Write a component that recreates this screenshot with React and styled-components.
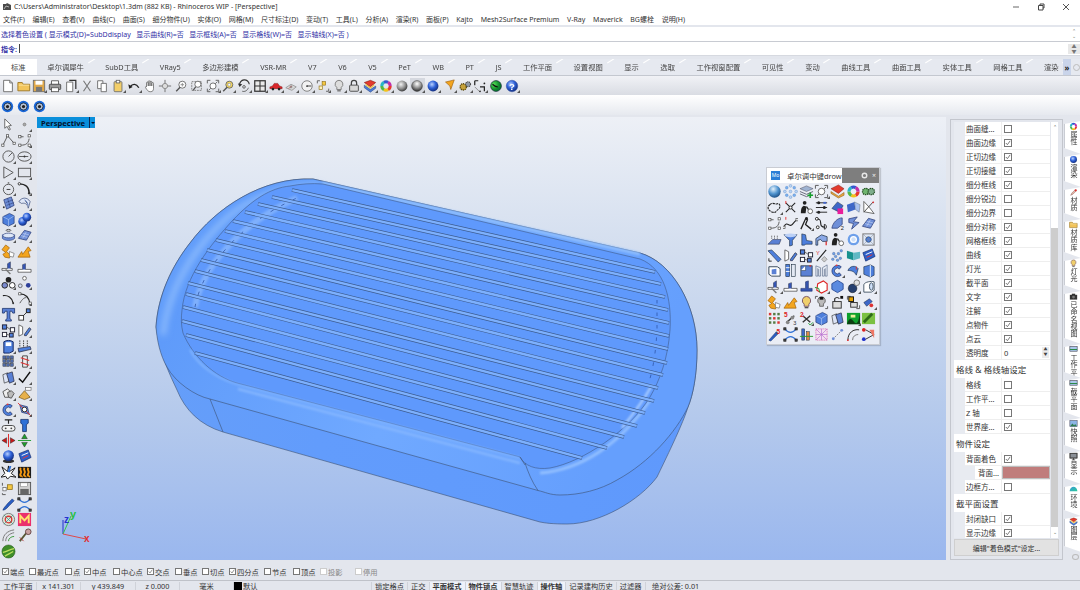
import React from "react";
import styled, { createGlobalStyle } from "styled-components";

const GlobalStyle = createGlobalStyle`
html, body { margin: 0; padding: 0; }
body {
  width: 1080px;
  height: 590px;
  overflow: hidden;
  background: #e3e6ed;
  font-family: "Noto Sans", "Noto Sans CJK SC", sans-serif;
  font-size: 7px;
  color: #333;
}
`;

const Window = styled.div`
  width: 1080px;
  height: 590px;
  display: flex;
  flex-direction: column;
  overflow: hidden;
  filter: blur(0.3px);
`;

const TitleBar = styled.div`
  height: 13px;
  display: flex;
  align-items: center;
  padding-left: 3px;
  background: #fff;
  font-size: 7px;
  white-space: nowrap;
`;

const TitleText = styled.span`
  margin-left: 3px;
  flex: 1;
`;

const WinButton = styled.svg`
  width: 8px;
  height: 8px;
  margin-right: ${(p) => p.$gap}px;
`;

const MenuBar = styled.div`
  height: 12px;
  display: flex;
  align-items: center;
  gap: 7.7px;
  padding-left: 3px;
  background: #fff;
  font-size: 7px;
  white-space: nowrap;
`;

const CommandBox = styled.div`
  margin-top: 2px;
  height: 29px;
  box-sizing: border-box;
  display: flex;
  flex-direction: column;
  background: #fff;
  border-bottom: 1px solid #d6d9e0;
  color: #2f2fa5;
  font-size: 7px;
`;

const CommandLine = styled.div`
  height: ${(p) => p.$h}px;
  display: flex;
  align-items: center;
  padding-left: 1px;
  white-space: pre;
  font-weight: ${(p) => (p.$bold ? 700 : 400)};
  border-top: ${(p) => (p.$line ? "1px solid #c8cbd2" : "none")};
`;

const Caret = styled.span`
  width: 1px;
  height: 9px;
  margin-left: 2px;
  background: #444;
`;

const LineFill = styled.span`
  flex: 1;
`;

const ScrollArrows = styled.span`
  width: 12px;
  margin-right: 0;
  display: flex;
  flex-direction: column;
  align-items: center;
  color: #777;
  font-size: 5px;
  line-height: 5px;
  background: ${(p) => (p.$boxed ? "#e8e8e8" : "transparent")};
`;

const TabStrip = styled.div`
  margin-top: 3px;
  height: 17px;
  box-sizing: border-box;
  display: flex;
  align-items: flex-end;
  background: #e6e9f0;
  border-bottom: 1px solid #c4c8d0;
  overflow: hidden;
  font-size: 7.3px;
  white-space: nowrap;
`;

const Tab = styled.div`
  position: relative;
  height: 16px;
  display: flex;
  align-items: center;
  justify-content: center;
  padding: 0 ${(p) => p.$pad ?? 10.75}px;
  color: #444;
  background: ${(p) => (p.$active ? "#fff" : "transparent")};
  &::after {
    content: "";
    position: absolute;
    right: -2px;
    top: 1px;
    width: 8px;
    height: 5px;
    border-top: 1px solid #fff;
    transform: rotate(-32deg);
  }
`;

const TabMore = styled.div`
  position: absolute;
  left: 1063px;
  top: 59px;
  width: 8px;
  height: 16px;
  background: #c9d4ea;
  display: flex;
  align-items: center;
  justify-content: center;
  color: #222;
  font-size: 8px;
  font-weight: 700;
`;

const TabGear = styled.div`
  position: absolute;
  left: 1073px;
  top: 64px;
  width: 5px;
  height: 5px;
  border: 1px solid #bbb;
  border-radius: 50%;
`;

const Toolbar = styled.div`
  height: 19px;
  display: flex;
  align-items: center;
  background: linear-gradient(#f1f2f6, #d9dce3);
`;

const SubToolbar = styled.div`
  height: 20px;
  box-sizing: border-box;
  padding-top: 3px;
  display: flex;
  align-items: center;
  background: linear-gradient(#fff, #e6e9ef);
`;

const Cell = styled.span`
  position: relative;
  flex: none;
  width: ${(p) => p.$w ?? 15.75}px;
  height: 15px;
  display: flex;
  align-items: center;
  justify-content: center;
  background: ${(p) => (p.$on ? "#d5d8df" : "transparent")};
  svg { display: block; }
`;

const Corner = styled.i`
  position: absolute;
  right: 0;
  bottom: 0;
  width: 0;
  height: 0;
  border-left: 3px solid transparent;
  border-bottom: 3px solid #555;
`;

const Main = styled.div`
  height: 445px;
  display: flex;
  background: #e3e6ed;
`;

const LeftTools = styled.div`
  width: 37px;
  flex: none;
  display: grid;
  grid-template-columns: 16px 16px;
  grid-auto-rows: 15.8px;
  justify-items: center;
  align-items: center;
  align-content: start;
  padding-top: 2px;
  box-sizing: border-box;
`;

const Viewport = styled.div`
  position: relative;
  width: 909px;
  height: 443px;
  margin-top: 2px;
  flex: none;
  background: linear-gradient(#edf0f6 0%, #d3deef 30%, #b4c9ec 68%, #9ab7ee 100%);
`;

const ViewLabel = styled.div`
  position: absolute;
  left: 0;
  top: 0;
  width: 58px;
  height: 11px;
  display: flex;
  align-items: center;
  background: #0a8fdb;
  color: #04122e;
  font-size: 7.6px;
  font-weight: 700;
  padding-left: 4px;
  box-sizing: border-box;
`;

const LabelArrow = styled.span`
  position: absolute;
  right: 0;
  top: 0;
  width: 6px;
  height: 11px;
  box-sizing: border-box;
  border-left: 1px solid #0b2a55;
  display: flex;
  align-items: center;
  justify-content: center;
  &::after {
    content: "";
    border-left: 2px solid transparent;
    border-right: 2px solid transparent;
    border-top: 2px solid #04122e;
  }
`;

const ModelSvg = styled.svg`
  position: absolute;
  inset: 0;
  width: 909px;
  height: 443px;
`;

const FloatPanel = styled.div`
  position: absolute;
  left: 729px;
  top: 50px;
  width: 114px;
  height: 178px;
  background: #eaedf5;
  border: 1px solid #c9ccd3;
  box-sizing: border-box;
  display: flex;
  flex-direction: column;
  box-shadow: 1px 1px 1px rgba(0, 0, 0, 0.15);
`;

const FloatHead = styled.div`
  height: 15px;
  display: flex;
  align-items: center;
  background: #fff;
  font-size: 7.4px;
  white-space: nowrap;
`;

const MoBadge = styled.span`
  width: 9px;
  height: 9px;
  margin: 0 7px 0 4px;
  background: #2c7fd6;
  color: #fff;
  font-size: 5px;
  line-height: 9px;
  text-align: center;
`;

const FloatTitle = styled.span`
  flex: 1;
`;

const FloatTools = styled.span`
  width: 37px;
  height: 15px;
  flex: none;
  background: #7e7e7e;
  display: flex;
  align-items: center;
  justify-content: flex-end;
  gap: 4px;
  padding-right: 3px;
  box-sizing: border-box;
  color: #eee;
  font-size: 7px;
`;

const FloatGrid = styled.div`
  display: grid;
  grid-template-columns: repeat(7, 15.7px);
  grid-auto-rows: 15.8px;
  justify-items: center;
  align-items: center;
  padding: 1px 0 0 0;
`;

const RightPanel = styled.div`
  width: 113px;
  height: 441px;
  margin: 4px 0 0 4px;
  flex: none;
  box-sizing: border-box;
  border: 1px solid #c3c6cd;
  padding: 2px 4px 0 3px;
  display: flex;
  flex-direction: column;
`;

const PanelBody = styled.div`
  height: 416px;
  flex: none;
  display: flex;
  overflow: hidden;
`;

const PanelList = styled.div`
  width: 96px;
  flex: none;
  display: flex;
  flex-direction: column;
  background: #e8ebf1;
`;

const Row = styled.div`
  flex: none;
  height: 14px;
  display: flex;
  margin-left: ${(p) => p.$indent ?? 11}px;
  background: #fff;
  box-sizing: border-box;
  border-bottom: 1px solid #eeeeee;
  font-size: 7.5px;
  white-space: nowrap;
`;

const RowName = styled.span`
  width: ${(p) => 37 - (p.$deep ? 10 : 0)}px;
  flex: none;
  display: flex;
  align-items: center;
  padding-left: ${(p) => (p.$deep ? 3 : 1)}px;
  box-sizing: border-box;
  overflow: hidden;
  border-right: 1px solid #eeeeee;
`;

const RowValue = styled.span`
  flex: 1;
  display: flex;
  align-items: center;
  padding-left: 2px;
  position: relative;
`;

const Section = styled.div`
  flex: none;
  height: 18px;
  display: flex;
  align-items: center;
  padding-left: 2px;
  font-size: 8.5px;
  background: #fff;
`;

const Check = styled.span`
  width: ${(p) => p.$size ?? 6}px;
  height: ${(p) => p.$size ?? 6}px;
  flex: none;
  display: flex;
  align-items: center;
  justify-content: center;
  border: 1px solid ${(p) => (p.$off ? "#ccc" : "#777")};
  background: #fff;
  color: #666;
  svg { display: block; width: 100%; height: 100%; }
`;

const Swatch = styled.span`
  position: absolute;
  inset: 0 0 0 0;
  background: #c07d7c;
  border: 1px solid #bdbdbd;
`;

const Spinner = styled.span`
  position: absolute;
  right: 1px;
  top: 1px;
  width: 7px;
  height: 11px;
  background: #ececec;
  color: #444;
  font-size: 4px;
  line-height: 5px;
  text-align: center;
`;

const PanelScroll = styled.div`
  width: 8px;
  margin-left: 1px;
  flex: none;
  display: flex;
  flex-direction: column;
  background: #fff;
`;

const ScrollEnd = styled.div`
  height: ${(p) => p.$h}px;
  flex: none;
  text-align: center;
  color: #666;
  font-size: 5px;
  line-height: 10px;
`;

const ScrollThumb = styled.div`
  height: 299px;
  flex: none;
  background: #cdcdcd;
`;

const PanelButton = styled.div`
  height: 15px;
  margin: 1px -1px 0 0;
  display: flex;
  align-items: center;
  justify-content: center;
  background: #e2e2e2;
  border: 1px solid #cfcfcf;
  font-size: 7px;
`;

const DockTabs = styled.div`
  position: relative;
  width: 17px;
  margin-left: 1px;
  padding-top: 6px;
  flex: none;
  display: flex;
  flex-direction: column;
`;

const DockTab = styled.div`
  height: ${(p) => p.$h}px;
  flex: none;
  display: flex;
  flex-direction: column;
  align-items: center;
  background: #fff;
  padding-top: 1px;
  box-sizing: border-box;
  clip-path: polygon(0 3px, 100% 0, 100% 100%, 0 calc(100% - 6px));
  border-left: 1px solid #c9ccd3;
  font-size: 7px;
  line-height: 8px;
  color: #333;
  white-space: nowrap;
`;

const DockLabel = styled.span`
  writing-mode: vertical-rl;
  letter-spacing: 0.2px;
`;

const DockGear = styled.div`
  width: 5px;
  height: 5px;
  margin: 2px 0 0 8px;
  border: 1px solid #bbb;
  border-radius: 50%;
`;

const OsnapBar = styled.div`
  height: 20px;
  box-sizing: border-box;
  padding: 3px 0 0 2px;
  display: flex;
  align-items: center;
  font-size: 7.3px;
  white-space: nowrap;
  background: #e3e6ed;
`;

const Osnap = styled.label`
  width: ${(p) => p.$w}px;
  flex: none;
  display: flex;
  align-items: center;
  gap: 1px;
  color: ${(p) => (p.$off ? "#888" : "#333")};
`;

const StatusBar = styled.div`
  height: 10px;
  box-sizing: border-box;
  padding-top: 1px;
  display: flex;
  align-items: flex-start;
  background: #e3e6ed;
  border-top: 1px solid #bfc2c9;
  font-size: 7.25px;
  line-height: 11px;
  white-space: nowrap;
  color: #333;
`;

const StatusCell = styled.span`
  width: ${(p) => p.$w}px;
  height: 100%;
  flex: none;
  display: flex;
  align-items: center;
  justify-content: ${(p) => (p.$left ? "flex-start" : "center")};
  box-sizing: border-box;
  border-right: ${(p) => (p.$plain ? "none" : "1px solid #cfd2d9")};
`;

const StatusToggle = styled.span`
  height: 100%;
  flex: none;
  padding: 0 ${(p) => p.$pad ?? 3}px;
  display: flex;
  align-items: center;
  border-right: 1px solid #cfd2d9;
  font-weight: ${(p) => (p.$on ? 700 : 400)};
  background: ${(p) => (p.$on ? "#eef2fa" : "transparent")};
`;

const ColorSquare = styled.i`
  width: 8px;
  height: 8px;
  margin-right: 1px;
  background: #000;
`;

// icon drawings, all on a 16x16 grid
const wheel = (
  <g fill="none" strokeWidth="3.4">
    <circle cx="8" cy="8" r="4.8" stroke="#e8382d" pathLength="6" strokeDasharray="1 5" />
    <circle cx="8" cy="8" r="4.8" stroke="#f2c21b" pathLength="6" strokeDasharray="1 5" strokeDashoffset="-1" />
    <circle cx="8" cy="8" r="4.8" stroke="#52b848" pathLength="6" strokeDasharray="1 5" strokeDashoffset="-2" />
    <circle cx="8" cy="8" r="4.8" stroke="#27b6c8" pathLength="6" strokeDasharray="1 5" strokeDashoffset="-3" />
    <circle cx="8" cy="8" r="4.8" stroke="#3358d0" pathLength="6" strokeDasharray="1 5" strokeDashoffset="-4" />
    <circle cx="8" cy="8" r="4.8" stroke="#c22fa8" pathLength="6" strokeDasharray="1 5" strokeDashoffset="-5" />
  </g>
);
const ln = { fill: "none", stroke: "#555", strokeWidth: 1 };
const bk = { fill: "none", stroke: "#222", strokeWidth: 1.4 };
const blueFill = { fill: "#6f8fd8", stroke: "#2d3f7a", strokeWidth: 0.8 };
const orange = { fill: "#f3a51f", stroke: "#9a5b06", strokeWidth: 0.7 };
const dots = (list, fill = "#fff", stroke = "#444") =>
  list.map(([x, y], i) => <rect key={i} x={x - 1.2} y={y - 1.2} width="2.4" height="2.4" fill={fill} stroke={stroke} strokeWidth="0.7" />);

const G = {
  doc: (<><path d="M3 1.5h7l3 3v10H3z" fill="#fff" stroke="#666" /><path d="M10 1.5v3h3" fill="none" stroke="#666" /></>),
  folder: (<><path d="M1 13.5V4h5l1 2h7.5v7.5z" fill="#f2c45a" stroke="#9a7420" /><path d="M2 7h12" stroke="#fbe6a6" /></>),
  save: (<><rect x="1.5" y="1.5" width="13" height="13" fill="#e1a94a" stroke="#6d6d6d" /><rect x="4" y="2" width="8" height="4.5" fill="#fff" /><rect x="4.5" y="9" width="7" height="5.5" fill="#777" /></>),
  print: (<><path d="M4 6V2h8v4" fill="#fff" stroke="#555" /><rect x="1.5" y="6" width="13" height="6" rx="1" fill="#999" stroke="#444" /><rect x="4" y="10" width="8" height="4.5" fill="#fff" stroke="#555" /></>),
  props: (<><path d="M3 3.5h7v11H3z" fill="#fff" stroke="#666" /><path d="M6 1.5h7.5v10" fill="none" stroke="#333" strokeWidth="1.4" /></>),
  cut: (<path d="M4 2l8 12M12 2L4 14" fill="none" stroke="#777" strokeWidth="1.3" />),
  copy: (<><path d="M3 2h6v9H3z" fill="#fff" stroke="#666" /><path d="M7 5h6v9.5H7z" fill="#fff" stroke="#666" /></>),
  paste: (<><rect x="3.5" y="3" width="9" height="11.5" rx="1" fill="#f3cf6a" stroke="#6e6e6e" /><rect x="6" y="1.5" width="4" height="3" fill="#fff" stroke="#666" /></>),
  undo: (<><path d="M3.5 9c3-4 7-4 10 1" fill="none" stroke="#222" strokeWidth="1.6" /><path d="M1.5 6l1 5 4-2z" fill="#222" /></>),
  hand: (<path d="M4 9V4.5a1 1 0 012 0V8V3a1 1 0 012 0v5V3.5a1 1 0 012 0V8V5a1 1 0 012 0v6c0 2-1 3.5-3 3.5H8C6 14.5 5 13 3 10c-.6-1 .4-2 1-1z" fill="#fff" stroke="#555" strokeWidth="0.8" />),
  pan: (<><path d="M8 1v14M1 8h14" stroke="#666" /><circle cx="8" cy="8" r="3" fill="#ddd" stroke="#888" /></>),
  zoom: (<><circle cx="9.5" cy="6.5" r="4" fill="#fff" stroke="#666" /><path d="M7 9.5L2.5 14" stroke="#555" strokeWidth="1.6" /><path d="M7.5 6.5h4M9.5 4.5v4" stroke="#888" /></>),
  zoomWin: (<><rect x="2" y="3" width="11" height="10" fill="none" stroke="#777" strokeDasharray="2 1" /><circle cx="9" cy="6" r="3.5" fill="#fff" stroke="#666" /><path d="M6.5 9l-3 4" stroke="#555" strokeWidth="1.4" /></>),
  zoomExt: (<><path d="M1.5 5V1.5H5M11 1.5h3.5V5M14.5 11v3.5H11M5 14.5H1.5V11" {...ln} /><path d="M3 13L13 3" stroke="#666" /><circle cx="8" cy="8" r="3.5" fill="#fff" stroke="#666" /></>),
  zoomSel: (<><circle cx="9.5" cy="6.5" r="4" fill="#f4d65c" stroke="#666" /><path d="M7 9.5L2.5 14" stroke="#555" strokeWidth="1.6" /><rect x="8" y="5" width="3" height="3" fill="#fff" stroke="#888" strokeWidth=".6" /></>),
  rotate: (<><path d="M3 7a5.5 5.5 0 0111-1" fill="none" stroke="#333" strokeWidth="1.3" /><path d="M1 5l2 4 3-3z" fill="#333" /><path d="M6 14c3 1 6-1 7-4" {...ln} /><circle cx="8" cy="9" r="1.5" {...ln} /></>),
  four: (<><rect x="2" y="2" width="12" height="12" fill="#e9e9e9" stroke="#333" strokeWidth="1.4" /><path d="M8 2v12M2 8h12" stroke="#333" strokeWidth="1.2" /></>),
  car: (<><path d="M1 11V9l3-1 2-3h4l2 3 3 1v2z" fill="#d8262b" stroke="#7d0e10" strokeWidth="0.5" /><circle cx="4.5" cy="11.5" r="1.5" fill="#222" /><circle cx="11.5" cy="11.5" r="1.5" fill="#222" /></>),
  eye: (<><path d="M2 10l6-4 6 3-5 4z" fill="#d8d8d8" stroke="#888" strokeWidth="0.8" /><circle cx="8" cy="9" r="1.6" fill="#999" /><path d="M5 11l4-3" stroke="#b44" strokeWidth="0.6" /></>),
  clock: (<><circle cx="8" cy="8" r="6" fill="#f2f2f2" stroke="#777" /><path d="M8 8h5" stroke="#333" /><circle cx="8" cy="8" r="1" fill="#333" /></>),
  snap: (<><path d="M1.5 5V2h3M14.5 11v3h-3" {...ln} /><rect x="7" y="3" width="4" height="4" fill="#f5c842" stroke="#8a6b12" strokeWidth=".7" /><rect x="3.5" y="8" width="4" height="4" fill="#fff2b8" stroke="#8a6b12" strokeWidth=".7" /></>),
  bulb: (<><path d="M8 1.5a4.5 4.5 0 00-2.5 8.2V12h5V9.7A4.5 4.5 0 008 1.5z" fill="#ddd" stroke="#777" /><path d="M6 13.5h4" stroke="#666" strokeWidth="1.4" /></>),
  lock: (<><path d="M5 7V4.5a3 3 0 016 0V7" fill="none" stroke="#444" strokeWidth="1.4" /><rect x="3" y="7" width="10" height="7" rx="1" fill="#d8d8d8" stroke="#444" /></>),
  layers: (<><path d="M1.5 4l7-2.5 6 2.5-6 5z" fill="#e33b2e" stroke="#7a1410" strokeWidth=".6" /><path d="M1.5 7l7 5 6-4v2.5l-6 4.5-7-5z" fill="#4d7dd6" stroke="#2a447f" strokeWidth=".6" /><path d="M3 5.5l5.5 4 4.5-3.5v1.5l-4.5 3.5L3 7z" fill="#f0c33d" /></>),
  wheel,
  ballGray: (<circle cx="8" cy="8" r="6.2" fill="url(#ballGray)" />),
  ballDark: (<circle cx="8" cy="8" r="6.2" fill="url(#ballDark)" stroke="#333" strokeWidth=".5" />),
  ballBlue: (<circle cx="8" cy="8" r="6.2" fill="url(#ballBlue)" />),
  ballPale: (<circle cx="8" cy="8" r="6.6" fill="url(#ballPale)" />),
  ballGreen: (<><circle cx="8" cy="8" r="6.2" fill="url(#ballGreen)" stroke="#123" strokeWidth=".7" /><path d="M4 6c2 2 3 3 6 3" stroke="#111" strokeWidth="1.3" fill="none" /></>),
  coneOr: (<path d="M4 3.5L14 1l-4 11-1-4z" {...orange} />),
  gears: (<><circle cx="6" cy="9" r="3.6" fill="#c6a23a" stroke="#5b4a12" strokeDasharray="1.5 .8" strokeWidth="1.5" /><circle cx="11.5" cy="6" r="2.8" fill="#8f9aa7" stroke="#444" strokeDasharray="1.2 .8" strokeWidth="1.3" /></>),
  gearsGreen: (<><circle cx="5" cy="8" r="3.4" fill="#6fb56f" stroke="#264f26" strokeDasharray="1.5 .8" strokeWidth="1.4" /><circle cx="11" cy="8" r="3.4" fill="#7fae8c" stroke="#264f26" strokeDasharray="1.5 .8" strokeWidth="1.4" /></>),
  cplane: (<><path d="M2 2h4M2 2v5M8 9h5v5" {...bk} /><path d="M2 9l5 5" stroke="#888" /><circle cx="8" cy="14" r="1" fill="#222" /><circle cx="13" cy="5" r="1" fill="#222" /></>),
  help: (<><circle cx="8" cy="8" r="6.6" fill="url(#ballBlue)" stroke="#2c4ca0" strokeWidth=".5" /><text x="8" y="12" textAnchor="middle" fontSize="11" fontWeight="700" fill="#fff" fontFamily="Liberation Sans, sans-serif">?</text></>),
  disc: (<><circle cx="8" cy="8" r="7" fill="#1a67d8" /><circle cx="8" cy="8" r="4.4" fill="#b9c4d8" stroke="#123" /><circle cx="8" cy="8" r="2" fill="#222" /></>),
  arrow: (<path d="M4 2v10l2.5-2 2 4 1.5-.8-2-3.7 3-.5z" fill="#fff" stroke="#555" strokeWidth=".9" />),
  dot: (<circle cx="8" cy="8" r="1.5" fill="#aaa" stroke="#888" />),
  poly: (<><path d="M2 13L7 3l7 8" {...ln} />{dots([[2, 13], [7, 3], [14, 11]])}</>),
  curvePts: (<><path d="M3 4h4M3 13c4 0 9 0 10-7" {...ln} />{dots([[3, 4], [13, 3], [3, 13], [13, 13]])}</>),
  circle: (<><circle cx="8" cy="8" r="6" {...ln} /><path d="M8 8l4-4" {...ln} /></>),
  ellipse: (<><ellipse cx="8" cy="8" rx="7" ry="5" {...ln} /><path d="M2 8h10" {...ln} /><circle cx="8" cy="8" r="1" fill="#333" /></>),
  open: (<path d="M3 2v12l10-6z" {...ln} />),
  rect: (<rect x="1.5" y="3.5" width="13" height="9" fill="none" stroke="#555" />),
  arcCirc: (<><circle cx="8" cy="9" r="5.5" {...ln} /><path d="M6 9h4" stroke="#333" /><circle cx="8" cy="2" r="1" fill="#777" /></>),
  curveB: (<><path d="M2 3c7 0 11 3 11 10" fill="none" stroke="#222" strokeWidth="1.4" /><circle cx="2.5" cy="3" r="1.3" fill="#fff" stroke="#333" /><circle cx="13" cy="13" r="1.3" fill="#333" /></>),
  meshSurf: (<><path d="M3 4l8-3 3 9-8 4z" {...blueFill} /><path d="M5 7l8-3M6 10l8-3M7 2.5l3 10" stroke="#1b2a60" strokeWidth=".5" /><circle cx="3" cy="12" r="1" fill="#333" /></>),
  surfCurl: (<><path d="M2 6c3-5 9-5 12 0l-2 7c-1-5-4-6-7-5z" fill="#dfe7f7" stroke="#45557f" strokeWidth=".8" /><path d="M8 4c2 1 3 3 4 6" stroke="#6f8fd8" /></>),
  cube: (<><path d="M2 5l7-3.5L14 4v8l-6 3-6-3z" fill="#4e7fdc" stroke="#1f3572" strokeWidth=".7" /><path d="M2 5l6 3 6-4M8 8v7" stroke="#bcd0f5" strokeWidth=".6" fill="none" /></>),
  spheres: (<><circle cx="6" cy="10" r="4.6" fill="url(#ballBlue)" /><circle cx="10.5" cy="5.5" r="4.6" fill="url(#ballBlue)" /></>),
  cyl: (<><ellipse cx="8" cy="2.5" rx="2.5" ry="1" {...ln} /><path d="M1.5 7v4c2 3 11 3 13 0V7" fill="#6f8fd8" stroke="#2d3f7a" strokeWidth=".7" /><ellipse cx="8" cy="8" rx="6" ry="2.5" fill="#dfe8f8" stroke="#2d3f7a" strokeWidth=".7" /></>),
  plane: (<><path d="M1.5 11L8 2.5l7 2L10 13z" {...blueFill} /><path d="M4 8l7 2M6 5.5l7 2M6 11l4-7" stroke="#dbe5fa" strokeWidth=".5" /></>),
  puzzle: (<><path d="M5 1l4 3-3 4 4 4-1 3-5-1-2-3 3-2-4-3z" {...orange} /><path d="M9 8l5 2-1 4-4-1z" fill="#fff" stroke="#666" strokeWidth=".7" /></>),
  fold: (<path d="M1 14l4-6 1 3 6-8 3 4-3 1 2 6z" {...orange} />),
  toolA: (<><path d="M1 9h6V4l3-2v7h2v2H1z" fill="#fff" stroke="#333" strokeWidth=".7" /><path d="M7 9V4l3-2v7" fill="#3554b0" /><path d="M5 10l5 5" stroke="#777" strokeWidth="1.5" /></>),
  toolB: (<><path d="M1 10h5V5l3-1v6h6v3H1z" fill="#fff" stroke="#333" strokeWidth=".7" /><path d="M6 10V5l3-1v6z" fill="#3554b0" /></>),
  toolC: (<path d="M2 13V10h5V3l3-1v8h4v3z" fill="#3554b0" stroke="#1a2c66" strokeWidth=".6" />),
  balls: (<><circle cx="8" cy="5" r="3" fill="#222" /><circle cx="4" cy="11" r="3" fill="#7a8ad0" stroke="#222" /><circle cx="12" cy="11" r="3" fill="#fff" stroke="#222" /></>),
  nodes: (<><circle cx="8" cy="3.5" r="2" fill="#fff" stroke="#666" /><circle cx="3.5" cy="11.5" r="2" fill="#d6e0f6" stroke="#666" /><circle cx="12" cy="11" r="2.5" fill="#2d3f9a" /></>),
  arc: (<><path d="M2 5c5-1 10 2 11 8" fill="none" stroke="#222" strokeWidth="1.3" /><circle cx="13" cy="13" r="1" fill="#333" /></>),
  arcPts: (<><path d="M3 3c6 0 10 4 11 11" fill="none" stroke="#222" strokeWidth="1.2" /><path d="M3 13c3-5 5-6 7-6" {...ln} />{dots([[3, 3], [14, 13]])}</>),
  bigT: (<path d="M1.5 1.5h13v5h-2l-1-2H9.5v8l1.5 1v1.5H5V13.5l1.5-1v-8H4.5l-1 2h-2z" fill="#5a80d4" stroke="#162c66" strokeWidth=".8" />),
  scale: (<><rect x="2" y="9" width="5" height="5" fill="#fff" stroke="#333" /><rect x="10" y="2" width="4" height="4" fill="#4e7fdc" stroke="#222" /><path d="M7 9l3-3" stroke="#333" /></>),
  blocks: (<><rect x="1.5" y="2" width="4.5" height="4.5" fill="#4e7fdc" stroke="#223" /><rect x="10" y="5" width="4.5" height="4.5" fill="#fff" stroke="#223" /><rect x="1.5" y="10" width="4.5" height="4.5" fill="#fff" stroke="#223" /><rect x="9" y="11" width="4" height="4" fill="#4e7fdc" stroke="#223" /><path d="M6 4l4 3M6 12l3 1" stroke="#666" /></>),
  mirror: (<><path d="M2 2v12l4-2V4z" fill="#fff" stroke="#444" strokeWidth=".8" /><path d="M8 12l5-7 2 1.5-5 7H8z" fill="#4e7fdc" stroke="#223" strokeWidth=".7" /></>),
  box2: (<><path d="M3 3c3-2 7-2 10 0v10l-4 2H3z" fill="#4e7fdc" stroke="#0f2460" /><rect x="5" y="3.5" width="6" height="4" fill="#fff" /></>),
  rails: (<><path d="M3 1.5v7M7 1.5v7M11 1.5v7" stroke="#333" strokeDasharray="1.5 1" /><path d="M1 10l13-2 1 3-13 3z" fill="#4e7fdc" stroke="#223" strokeWidth=".7" /></>),
  grid3: (<g fill="#4e6aa8" stroke="#222" strokeWidth=".4">{[2, 6, 10].flatMap((y) => [2, 6, 10].map((x) => <rect key={`${x}-${y}`} x={x} y={y} width="3.2" height="3.2" />))}</g>),
  redCol: (<><path d="M6 2h5v12H6z" fill="#eee" stroke="#444" /><path d="M4 4l9 3M4 9l9 3" stroke="#d33" strokeWidth="1.2" /></>),
  bars: (<><path d="M2 5l5-2 1.5 9-5 2z" fill="#dde4f5" stroke="#333" strokeWidth=".7" /><path d="M6 4l6-2 2 10-5 2z" fill="#5a80d4" stroke="#223" strokeWidth=".7" /></>),
  check: (<path d="M2 9l4 4 8-11" fill="none" stroke="#111" strokeWidth="1.6" />),
  boxes: (<><path d="M2 6l5-3 3 3-2 6H4z" fill="#eee" stroke="#555" /><path d="M7 7l4-2 3 3-3 5-3-1z" fill="#bbb" stroke="#555" /></>),
  cone: (<><path d="M8 5L2 12l6 2.5 6-2.5z" fill="#e6b04a" stroke="#6b4c10" strokeWidth=".7" /><rect x="9" y="1.5" width="6" height="3" fill="#fff" stroke="#666" strokeWidth=".7" /></>),
  magnet: (<><path d="M12 4a6 6 0 10 0 9l-2-2.5a3 3 0 11 0-4z" fill="#4e7fdc" stroke="#1b2a60" strokeWidth=".7" /><circle cx="7" cy="2.5" r="1" fill="#e33" /></>),
  probe: (<><path d="M3 3l8 2 2 8-8-2z" {...blueFill} /><path d="M1 1l14 14" stroke="#d33" /><circle cx="8" cy="8" r="2.5" fill="#fff" stroke="#333" /></>),
  dim: (<><path d="M4 2h8M8 2v4" stroke="#222" strokeWidth="1.2" /><rect x="1" y="8" width="14" height="6" rx="3" fill="#f3f3f3" stroke="#444" /><circle cx="5" cy="11" r="1" fill="#444" /><circle cx="11" cy="11" r="1" fill="#444" /></>),
  pillar: (<path d="M4 1.5h8v4l-2 1.5v7.5H6V7L4 5.5z" fill="#2f71d6" stroke="#0f2a66" strokeWidth=".8" />),
  redArrows: (<><path d="M8 1v14" stroke="#e02020" /><path d="M1 8l5-3v6zM15 8l-5-3v6z" fill="#c81818" stroke="#222" strokeWidth=".5" /></>),
  greenArrows: (<><path d="M1 8h14" stroke="#1e9e2d" /><path d="M8 1l-3 5h6zM8 15l-3-5h6z" fill="#1e9e2d" stroke="#222" strokeWidth=".5" /></>),
  ballBase: (<><ellipse cx="8" cy="13" rx="6" ry="2" fill="#333" /><circle cx="8" cy="7" r="5.8" fill="url(#ballBlue)" /></>),
  card: (<><path d="M2 5l10-4 3 8-10 5z" fill="#2e5fc8" stroke="#11296b" strokeWidth=".7" /><path d="M5 7l7-3" stroke="#fff" /><path d="M6 10l6-3" stroke="#e33" /></>),
  star: (<><path d="M1 2l6 5 1-6 1 6 6-4-4 6 5 4-6-1-3 3-2-3-5 1 4-4z" fill="#fff" stroke="#111" strokeWidth="1" /><path d="M9 1l2 0-2 7-2-1z" fill="#2f71d6" /></>),
  oranges: (<><rect x="1" y="2" width="14" height="12" fill="#1a1a1a" /><path d="M4 3c-2 3 2 3 0 6s2 3 1 4M8 3c-2 3 2 3 0 6s2 3 1 4M12 3c-2 3 2 3 0 6s2 3 1 4" stroke="#f59a13" strokeWidth="2" fill="none" /></>),
  snap2: (<><path d="M1.5 13v1.5H5M1.5 5V2" stroke="#555" fill="none" /><rect x="7" y="4" width="5" height="5" fill="#f5c842" stroke="#8a6b12" strokeWidth=".8" /><rect x="2" y="7" width="3.5" height="3.5" fill="#fff" stroke="#555" strokeWidth=".7" /></>),
  floppy: (<><rect x="1.5" y="1.5" width="13" height="13" fill="#cfcfcf" stroke="#555" /><rect x="4" y="2" width="7" height="4" fill="#fff" stroke="#777" strokeWidth=".5" /><rect x="3.5" y="8.5" width="9" height="6" fill="#666" /></>),
  brush: (<><path d="M2 14c1-3 3-4 5-7l5-5 2 2-5 5c-2 2-4 5-7 5z" fill="#2a5ec4" stroke="#0f2a66" strokeWidth=".6" /></>),
  curveX: (<><path d="M2 2c4 5 8 5 12 0M2 14c4-5 8-5 12 0" fill="none" stroke="#2f71d6" strokeWidth="1.2" />{dots([[2, 2], [14, 2], [2, 14], [14, 14]], "#444", "#222")}</>),
  atom: (<><circle cx="8" cy="8" r="6.5" fill="#dfe8d8" stroke="#777" /><circle cx="8" cy="8" r="3.5" fill="none" stroke="#d33" strokeWidth="1.4" /><path d="M3 3l10 10M13 3L3 13" stroke="#2a8a8a" strokeWidth=".7" /></>),
  redM: (<><rect x="1" y="1" width="14" height="14" fill="#ea2f6c" /><path d="M3.5 12V4l4.5 5 4.5-5v8" fill="none" stroke="#ffe36b" strokeWidth="2" /></>),
  arcs: (<><path d="M2 14C2 7 7 3 14 2M5 14c0-5 4-8 9-9" fill="none" stroke="#777" /><path d="M8 14c0-3 3-5 6-5" stroke="#3a9a3a" fill="none" /></>),
  wrench: (<><path d="M3 14L11 4" stroke="#553" strokeWidth="2" /><circle cx="12" cy="4" r="3" fill="#c8a0a0" stroke="#644" /><path d="M3 10l4 4" stroke="#a33" /></>),
  leafBall: (<><circle cx="8" cy="8" r="7" fill="#3e8d29" stroke="#1f4e14" strokeWidth=".5" /><path d="M2 9c4-1 7-3 12-4M4 13c3-2 6-3 9-5" stroke="#bde060" strokeWidth="1.4" fill="none" /></>),
  dotRing: (<>{[[8, 2], [12, 4], [14, 8], [12, 12], [8, 14], [4, 12], [2, 8], [4, 4], [8, 8]].map(([x, y], i) => <circle key={i} cx={x} cy={y} r="1.5" fill={i % 2 ? "#7ab0f0" : "#b9d4f6"} stroke="#5c88c0" strokeWidth=".4" />)}</>),
  stackGreen: (<><path d="M1 5l7-3 7 3-7 3z" fill="#9fb3d2" stroke="#445" strokeWidth=".5" /><path d="M1 8l7 3 7-3M1 10.5l7 3 5-2" fill="none" stroke="#667" /><path d="M12 9v6M9 12h6" stroke="#17a02e" strokeWidth="1.8" /></>),
  layerSel: (<><path d="M1 5l8-4 6 4-6 5z" fill="#e33b2e" stroke="#7a1410" strokeWidth=".5" /><path d="M1 8l8 5 6-4v3l-6 3-8-5z" fill="#e9a33d" stroke="#7a5410" strokeWidth=".5" /></>),
  loop: (<path d="M3 5c3-3 5 0 8-1s4 4 1 6-2 4-6 3-7-5-3-8z" fill="none" stroke="#222" strokeWidth="1.2" strokeDasharray="2.5 .8" />),
  xNodes: (<><path d="M3 13L13 3M3 3l10 10" stroke="#222" strokeWidth="1.1" /><circle cx="8" cy="8" r="1.6" fill="#fff" stroke="#222" /><path d="M3 1v3" stroke="#e33" /></>),
  figure: (<><path d="M2 14c0-5 1-7 3-8l3 1-1 7" fill="#222" /><circle cx="6" cy="3" r="2" fill="#222" /><path d="M8 7l4 6" stroke="#222" strokeWidth="1.3" /><circle cx="12" cy="12" r="2.5" fill="#fff" stroke="#666" /></>),
  nodes2: (<><path d="M2 3h12M2 8h12M2 13h12" stroke="#222" /><circle cx="5" cy="3" r="1.6" fill="#222" /><circle cx="11" cy="8" r="1.6" fill="#222" /><circle cx="5" cy="13" r="1.6" fill="#222" /><rect x="10" y="2" width="3" height="2" fill="#46c" /></>),
  magenta: (<><path d="M2 9l6-7 6 4-4 7z" fill="#3e67c8" stroke="#123" strokeWidth=".5" /><rect x="8" y="9" width="6" height="6" fill="#e91e9b" /></>),
  blueFold: (<><path d="M1 5l8-3 1 8-8 3z" fill="#3e67c8" /><path d="M9 2l6 3-1 8-4-3z" fill="#a9c1ef" stroke="#456" strokeWidth=".4" /></>),
  corner: (<><path d="M3 1.5v11l11 2L9 8z" fill="#fff" stroke="#666" /><path d="M13 2L3 13" stroke="#444" /><circle cx="13" cy="2.5" r="1" fill="#d33" /></>),
  curveRed: (<><path d="M1 12c3-8 6 1 9-3s3-4 5-5" fill="none" stroke="#222" strokeWidth="1.2" /><path d="M3 1v3" stroke="#e33" strokeWidth="1" />{dots([[1, 12], [15, 4]])}</>),
  figure3: (<><path d="M2 14l5-11 2 1-2 5 6 5" fill="none" stroke="#222" strokeWidth="1.4" /><circle cx="8" cy="2.5" r="1.5" fill="#222" /></>),
  curved: (<><path d="M3 3c8 0 0 9 9 9" stroke="#222" fill="none" strokeWidth="1.2" /><circle cx="3" cy="3" r="1.5" fill="#fff" stroke="#222" /><circle cx="4" cy="12" r="1.5" fill="#fff" stroke="#222" /><path d="M11 9v5c3 0 3-5 0-5z" fill="none" stroke="#222" /></>),
  wing: (<><path d="M2 13c1-6 6-11 11-11v7L8 13z" {...blueFill} /><text x="13" y="15" fontSize="6" textAnchor="middle" fill="#222" fontFamily="Liberation Sans, sans-serif">2</text></>),
  wingDual: (<><path d="M3 3l9-2-4 5 6 1-8 7 2-6-5-1z" {...blueFill} /></>),
  sheet: (<><path d="M1 13l5-5h9l-2 5z" fill="#5a80d4" stroke="#223" strokeWidth=".5" /><path d="M5 4v4M8 4v4M11 4v4" stroke="#444" strokeDasharray="1 1" /></>),
  funnel: (<><path d="M1 3h14L10 9v5l-3 1V9z" fill="#4e7fdc" stroke="#123" strokeWidth=".6" /><ellipse cx="8" cy="3.5" rx="6.5" ry="2" fill="#bcd0f5" /></>),
  chair: (<><path d="M3 2l4 1 1 6 6 1v3H7L6 14H3z" fill="#4e7fdc" stroke="#123" strokeWidth=".6" /></>),
  chair2: (<><path d="M2 7l6-4 6 2v5H9L7 8 4 9v5H2z" fill="#8aa8e6" stroke="#123" strokeWidth=".7" /><path d="M13 10v4" stroke="#d33" strokeWidth="1.4" /></>),
  ringBlue: (<><circle cx="8" cy="8" r="5" fill="#fff" stroke="#6ea0ea" strokeWidth="2.5" /><circle cx="8" cy="8" r="2.4" fill="#cfe0f8" /></>),
  boxTarget: (<><rect x="2" y="2" width="12" height="12" fill="#dfe8f8" stroke="#777" /><circle cx="8" cy="8" r="3" fill="#4e7fdc" stroke="#123" strokeWidth=".5" /><path d="M2 2l12 12M14 2L2 14" stroke="#888" strokeWidth=".5" /></>),
  strip: (<><path d="M1 3l4-1 10 10-3 3z" fill="#4e7fdc" stroke="#123" strokeWidth=".6" /><path d="M2 14v-3M2 14h3" stroke="#222" /></>),
  diag: (<><path d="M13 2L3 14" stroke="#222" strokeWidth="1.2" /><text x="2" y="7" fontSize="6" fill="#d33" fontFamily="Liberation Sans, sans-serif">Y</text><path d="M8 12l3-3 3 3-3 3z" fill="#ccc" stroke="#555" strokeWidth=".5" /></>),
  dotsBlue: (<>{[[3, 12], [6, 9], [9, 6], [4, 6], [11, 11], [8, 13], [12, 3]].map(([x, y], i) => <circle key={i} cx={x} cy={y} r="1.4" fill="#6ea0ea" stroke="#346" strokeWidth=".3" />)}</>),
  teal: (<><path d="M1 3l7 2v8l-7-2z" fill="#17918f" /><path d="M8 5l7-1v7l-7 2z" fill="#5fb8c4" /></>),
  cubeA: (<><path d="M2 4h9l3 2v8H5l-3-2z" fill="#fff" stroke="#345" /><path d="M5 7l5-1v6H5z" fill="#5a80d4" /></>),
  pillars: (<><rect x="3" y="1.5" width="4" height="13" fill="#4e7fdc" stroke="#123" strokeWidth=".6" /><rect x="9" y="1.5" width="4" height="13" fill="#e3e8f3" stroke="#123" strokeWidth=".6" /><path d="M3 5h4M3 9h4" stroke="#fff" /></>),
  cornerBlue: (<><rect x="2" y="3" width="12" height="11" fill="#5a80d4" stroke="#123" strokeWidth=".7" /><path d="M2 8h5V3" fill="#fff" stroke="#123" strokeWidth=".5" /><circle cx="12" cy="3" r="1" fill="#d33" /></>),
  mShape: (<path d="M2 14V3l5 2v9H5V7L4 6v8zM9 14V5l5-3v12h-2V6l-1 1v7z" fill="#e6ebf5" stroke="#457" strokeWidth=".6" />),
  redFold: (<><path d="M2 8c2-5 8-6 11-2l-2 7c-2-4-5-5-9-5z" fill="#4e7fdc" stroke="#123" strokeWidth=".6" /><path d="M11 4v3" stroke="#d33" /></>),
  cube3: (<><path d="M3 4l7-2 4 2v9l-4 2-7-3z" fill="#4e7fdc" stroke="#123" strokeWidth=".6" /><path d="M10 2v13" stroke="#cfe0f8" strokeWidth="1.2" /></>),
  redCube: (<><path d="M4 5l6-3 4 3v7l-6 3-5-3z" fill="#fff" stroke="#d22" strokeWidth="1.2" /><path d="M1 9l4 1 1 4" stroke="#1a9a2a" fill="none" /></>),
  hex: (<path d="M8 1.5l6 3.5v6l-6 3.5L2 11V5z" fill="#5a8ae0" stroke="#2d4f9a" />),
  bomb: (<><circle cx="7" cy="10" r="4.6" fill="#26406f" stroke="#111" strokeWidth=".5" /><circle cx="11.5" cy="4" r="3" fill="#e3e3e3" stroke="#777" /></>),
  cylCut: (<><path d="M3 6c1-3 8-4 11-3v9l-3 2H3z" fill="#fff" stroke="#456" /><ellipse cx="11" cy="8" rx="2" ry="4" fill="#cfe0f8" stroke="#456" /></>),
  bulbY: (<><path d="M8 1.5a4.5 4.5 0 00-2.5 8.2V12h5V9.7A4.5 4.5 0 008 1.5z" fill="#f0cf6b" stroke="#756" /><path d="M6 13.5h4" stroke="#555" strokeWidth="1.4" /></>),
  cornerBulb: (<><path d="M1.5 4V1.5H4M14.5 12v2.5H12" {...ln} /><path d="M8 2a4 4 0 00-2 7.5V12h4V9.5A4 4 0 008 2z" fill="#bbb" stroke="#666" /><path d="M6 2h4v3H6z" fill="#111" /></>),
  lockBk: (<><rect x="3" y="7" width="9" height="7" fill="#ddd" stroke="#333" /><path d="M5 7V4a3 3 0 015 0" fill="none" stroke="#333" strokeWidth="1.3" /><rect x="11" y="1" width="3" height="3" fill="#111" /></>),
  lockCorner: (<><path d="M1.5 5V1.5H5M14.5 11v3.5H11" {...ln} /><rect x="5" y="8" width="7" height="5" fill="#ddd" stroke="#333" /><rect x="3" y="2" width="5" height="5" fill="#e5a000" stroke="#111" /></>),
  sprayTool: (<><path d="M3 8l6-4 3 3-6 5z" fill="#3e67c8" stroke="#123" strokeWidth=".5" /><circle cx="11" cy="11" r="2" fill="#d33" /></>),
  redDots: (<g>{[2, 6.5, 11].flatMap((y) => [2, 6.5, 11].map((x) => <rect key={`${x}-${y}`} x={x} y={y} width="2.6" height="2.6" fill={x === y ? "#d33" : "#557a44"} />))}</g>),
  num5: (<><path d="M4 12l8-7" stroke="#333" strokeWidth="1.5" /><circle cx="5" cy="12" r="2" fill="#888" /><circle cx="10" cy="7" r="2" fill="#888" /><text x="1" y="6" fontSize="7" fontWeight="700" fill="#d22" fontFamily="Liberation Sans, sans-serif">5</text><text x="11" y="15" fontSize="6" fill="#333" fontFamily="Liberation Sans, sans-serif">3</text></>),
  num2: (<><path d="M4 12l8-7M4 5l8 7" stroke="#333" strokeWidth="1.5" /><text x="1" y="6" fontSize="7" fontWeight="700" fill="#d22" fontFamily="Liberation Sans, sans-serif">2</text><path d="M10 13l2 2 3-3" stroke="#1a9a2a" fill="none" /></>),
  greenBox: (<><rect x="1" y="2" width="14" height="12" fill="#0da02c" /><path d="M1 14c2-6 4-7 7-3s5 3 7-9v12z" fill="#0b3d12" /><path d="M5 4h5v3H5z" fill="#e9ef9a" /></>),
  greenSlash: (<><rect x="1" y="2" width="14" height="12" fill="#7bc142" /><path d="M3 12l9-9" stroke="#2e6b18" strokeWidth="3" /></>),
  brushRed: (<><path d="M2 14l8-9 2 2-8 8z" fill="#2a5ec4" stroke="#0f2a66" strokeWidth=".6" /><text x="10" y="7" fontSize="7" fontWeight="700" fill="#d22" fontFamily="Liberation Sans, sans-serif">5</text></>),
  barsMix: (<><rect x="3" y="2" width="3" height="12" fill="#3e67c8" stroke="#123" strokeWidth=".5" /><rect x="8" y="5" width="3" height="9" fill="#d84" stroke="#123" strokeWidth=".5" /><path d="M1 10h14" stroke="#2a9a2a" /></>),
  magGrid: (<><rect x="2" y="2" width="12" height="12" fill="#f3e0f0" stroke="#d6a" strokeDasharray="1 1" /><path d="M2 8h12M8 2v12M2 2l12 12M14 2L2 14" stroke="#b66fd0" strokeWidth=".7" /></>),
  dashLine: (<><path d="M3 13L13 3" stroke="#888" strokeDasharray="2 1" /><circle cx="3.5" cy="12.5" r="1.5" fill="#6f8fd8" /><circle cx="12.5" cy="3.5" r="1.5" fill="#6f8fd8" /></>),
  arcs2: (<><path d="M2 14C2 6 8 2 14 3" fill="none" stroke="#222" /><path d="M7 14c0-4 3-6 6-6" stroke="#777" fill="none" /><circle cx="2" cy="14" r="1" fill="#d33" /></>),
  redBlue: (<><circle cx="3" cy="3" r="2" fill="#d22" /><circle cx="3" cy="13" r="2" fill="#23c" /><path d="M5 3l9 5M5 13l9-5" stroke="#333" /><path d="M9 3l5 0v9z" fill="#e76" /></>),
  camera: (<><rect x="1.5" y="5" width="13" height="8.5" fill="#333" /><rect x="5" y="3" width="6" height="3" fill="#333" /><circle cx="8" cy="9" r="2.5" fill="#777" /></>),
  monitor: (<><rect x="1.5" y="2" width="13" height="9" fill="#555" stroke="#222" /><rect x="3" y="3.5" width="10" height="6" fill="#8a8f96" /><path d="M5 14h6M8 11v3" stroke="#222" strokeWidth="1.3" /></>),
  envGrad: (<path d="M1 11c1-6 4-8 7-8s6 2 7 8z" fill="url(#envGrad)" />),
  pic: (<><rect x="1.5" y="2.5" width="13" height="11" fill="#8cb5e6" stroke="#556" /><path d="M2 13l4-5 3 3 2-2 3 4z" fill="#2f7d4f" /></>),
  plan: (<><rect x="1.5" y="3" width="13" height="8" fill="#aac7ea" stroke="#334" /><path d="M1.5 8h13" stroke="#2a8a4a" strokeWidth="2" /></>),
  pencil: (<><path d="M3 13l2-4 6-6 2 2-6 6z" fill="#e7b9a8" stroke="#744" strokeWidth=".7" /><circle cx="12" cy="4" r="2" fill="#d33" /></>),
};

const Icon = ({ n, size = 15, tri, on, w }) => (
  <Cell $on={on} $w={w}>
    <svg width={size} height={size} viewBox="0 0 16 16">{G[n]}</svg>
    {tri && <Corner />}
  </Cell>
);

const MENUS = ["文件(F)", "编辑(E)", "查看(V)", "曲线(C)", "曲面(S)", "细分物件(U)", "实体(O)", "网格(M)", "尺寸标注(D)", "变动(T)", "工具(L)", "分析(A)", "渲染(R)", "面板(P)", "Kajto", "Mesh2Surface Premium", "V-Ray", "Maverick", "BG螺栓", "说明(H)"];

const TABS = ["卓尔调犀牛", "SubD工具", "VRay5", "多边形建模", "VSR-MR", "V7", "V6", "V5", "PeT", "WB", "PT", "JS", "工作平面", "设置视图", "显示", "选取", "工作视窗配置", "可见性", "变动", "曲线工具", "曲面工具", "实体工具", "网格工具", "渲染"];

const TOP_ICONS = [
  ["doc"], ["folder"], ["save", 1], ["print"], ["props", 1], ["cut"], ["copy"], ["paste", 1], ["undo", 1], ["hand"], ["pan"], ["zoom"], ["zoomWin"], ["zoomExt", 1], ["zoomSel", 1],
  ["rotate", 1], ["four", 1], ["car", 1], ["eye", 1], ["clock", 1], ["snap", 1], ["bulb", 1], ["lock", 1], ["layers", 1], ["wheel", 1], ["ballGray"], ["ballDark", 1, 1], ["ballBlue", 1], ["coneOr", 1], ["gears", 1], ["cplane", 1], ["ballGreen"], ["help", 1],
];

const LEFT_ICONS = [
  ["arrow"], ["dot", 1], ["poly"], ["curvePts", 1], ["circle", 1], ["ellipse", 1], ["open", 1], ["rect", 1], ["arcCirc", 1], ["curveB", 1], ["meshSurf", 1], ["surfCurl", 1], ["cube", 1], ["spheres", 1],
  ["cyl", 1], ["plane", 1], ["puzzle"], ["fold"], ["toolA"], ["toolB"], ["balls", 1], ["nodes", 1], ["arc"], ["arcPts", 1], ["bigT"], ["scale", 1], ["blocks"], ["mirror", 1], ["box2", 1], ["rails", 1],
  ["grid3", 1], ["redCol", 1], ["bars", 1], ["check", 1], ["boxes", 1], ["cone", 1], ["magnet", 1], ["probe", 1], ["dim"], ["pillar"], ["redArrows"], ["greenArrows"], ["ballBase"], ["card"],
  ["star"], ["oranges"], ["snap2"], ["floppy"], ["brush"], ["curveX"], ["atom"], ["redM"], ["arcs"], ["wrench"], ["leafBall"],
];

const FLOAT_ICONS = [
  "ballPale", "dotRing", "stackGreen", "zoomExt", "layerSel", "wheel", "gearsGreen",
  "loop", "xNodes", "figure", "nodes2", "magenta", "blueFold", "corner",
  "curvePts", "curveRed", "figure3", "curved", "wing", "wingDual", "plane",
  "sheet", "funnel", "chair", "chair2", "figure", "ringBlue", "boxTarget",
  "strip", "mirror", "blocks", "diag", "dotsBlue", "teal", "card",
  "cubeA", "pillars", "cornerBlue", "mShape", "magnet", "redFold", "cube3",
  "toolA", "toolB", "toolC", "redCube", "hex", "bomb", "cylCut",
  "puzzle", "fold", "bulbY", "cornerBulb", "lockBk", "lockCorner", "sprayTool",
  "redDots", "num5", "num2", "cube", "bars", "greenBox", "greenSlash",
  "brushRed", "curveX", "barsMix", "magGrid", "dashLine", "arcs2", "redBlue",
];

const TRIANGLED = new Set(["loop", "figure3", "zoomExt", "cylCut", "toolA", "redCube", "sprayTool", "bomb", "redFold", "magnet", "num2", "greenBox"]);

const ROWS_A = [["曲面缝...", 0], ["曲面边缘", 1], ["正切边缘", 1], ["正切接缝", 1], ["细分框线", 1], ["细分锐边", 0], ["细分边界", 0], ["细分对称", 1], ["网格框线", 1], ["曲线", 1], ["灯光", 1], ["截平面", 1], ["文字", 1], ["注解", 1], ["点物件", 1], ["点云", 1]];
const ROWS_B = [["格线", 0], ["工作平...", 0], ["Z 轴", 0], ["世界座...", 1]];

const DOCK = [
  ["wheel", "属性", 33], ["ballBlue", "渲染", 33], ["pencil", "材质", 32], ["folder", "材质库", 39], ["bulbY", "灯光", 33], ["camera", "已命名视图", 53],
  ["plan", "工作平", 34], ["plan", "截平面", 40], ["pic", "快照", 33], ["monitor", "显示", 33], ["envGrad", "环境", 32], ["layers", "图层", 36],
];

const OSNAPS = [["端点", 1, 27], ["最近点", 0, 36], ["点", 0, 19], ["中点", 1, 29], ["中心点", 0, 34], ["交点", 1, 28], ["垂点", 0, 27], ["切点", 0, 27], ["四分点", 1, 35], ["节点", 0, 29], ["顶点", 0, 27], ["投影", 2, 35], ["停用", 2, 30]];

const Tick = () => (
  <svg viewBox="0 0 7 7"><path d="M1 3.5l1.8 2L6 1" fill="none" stroke="#666" strokeWidth="1" /></svg>
);

const PropRow = ({ name, on, indent, deep, children }) => (
  <Row $indent={indent}>
    <RowName $deep={deep}>{name}</RowName>
    <RowValue>{children ?? <Check>{on ? <Tick /> : null}</Check>}</RowValue>
  </Row>
);

// left and right ends of the slats on the lid, in page coordinates
const SLATS = [
  [292, 190, 655, 272], [272, 197, 661, 284], [258, 204, 665, 297], [245, 212, 668, 310], [233, 221, 669, 323], [225, 231, 669, 336],
  [216, 240, 668, 349], [207, 250, 667, 363], [201, 260, 663, 375], [195, 271, 658, 388], [188, 283, 654, 401], [186, 294, 645, 413],
  [183, 307, 637, 426], [182, 321, 624, 437], [186, 335, 607, 448], [195, 353, 582, 458],
];

const OUTER = "M156 327C158 295 172 266 190 243C216 208 262 177 313 179L640 253C672 262 697 305 697 350C697 375 693 395 688 407C684 420 675 440 657 477C640 500 600 524 567 524C552 524 545 523 540 522L223 432C200 425 185 410 177 390C170 375 160 355 156 327Z";
const RIM = "M156 327C158 295 172 266 190 243C216 208 262 177 313 179L640 253C672 262 697 305 697 350C697 375 693 395 688 407C676 432 650 462 617 480C600 490 580 495 560 495C550 495 545 492 538 490.5L210 399C195 396 175 382 167 367C160 355 157 340 156 327Z";
const FLOOR = "M182 310C185 277 210 245 233 220C252 200 270 188 290 186C300 184 312 183 323 184L640 259C664 268 672 298 670 330C668 358 660 380 650 397C630 430 583 462 550 468C535 470 525 466 520 457L237 383C215 377 193 357 183 333C181 325 181 318 182 310Z";

const Model = () => (
  <ModelSvg viewBox="37 117 909 443">
    <defs>
      <linearGradient id="rimFill" x1="0" y1="0" x2="1" y2="0.3">
        <stop offset="0" stopColor="#6aa4fb" />
        <stop offset="0.15" stopColor="#5f9bfa" />
        <stop offset="0.6" stopColor="#70a9ff" />
        <stop offset="1" stopColor="#659ffd" />
      </linearGradient>
      <linearGradient id="bodyFill" x1="0" y1="0" x2="1" y2="0">
        <stop offset="0" stopColor="#659ef9" />
        <stop offset="0.3" stopColor="#629cfc" />
        <stop offset="1" stopColor="#5f99fc" />
      </linearGradient>
      <filter id="soft"><feGaussianBlur stdDeviation="1.3" /></filter>
      <filter id="softer"><feGaussianBlur stdDeviation="3" /></filter>
    </defs>
    <path d={OUTER} fill="url(#bodyFill)" stroke="#3c5172" strokeWidth="0.6" />
    <path d={RIM} fill="url(#rimFill)" stroke="#3c5172" strokeWidth="0.6" />
    <path d="M163 335C167 295 190 250 230 215C255 195 285 187 320 186" fill="none" stroke="#8fbdfd" strokeWidth="5" filter="url(#softer)" />
    <path d="M322 183L640 254" fill="none" stroke="#8fbefd" strokeWidth="3" filter="url(#soft)" />
    <path d="M238 389L520 463" fill="none" stroke="#84b6ff" strokeWidth="2.5" filter="url(#soft)" />
    <path d="M540 473C580 470 620 445 650 400" fill="none" stroke="#93c0ff" strokeWidth="3" filter="url(#soft)" />
    <path d={FLOOR} fill="#5f99fc" stroke="#3f5b8a" strokeWidth="0.6" />
    <path d="M190 350C200 368 220 380 240 385L520 458" fill="none" stroke="#82b5ff" strokeWidth="1.8" filter="url(#soft)" />
    <path d="M195 307C198 290 208 268 225 250C240 232 265 212 297 198" fill="none" stroke="#7fb0fd" strokeWidth="6" filter="url(#soft)" />
    <path d="M195 307C198 290 208 268 225 250C240 232 265 212 297 198" fill="none" stroke="#2f55a8" strokeWidth="0.8" strokeDasharray="3.5 9" />
    <path d="M657 300L657 330C656 350 653 373 647 387" fill="none" stroke="#2f55a8" strokeWidth="0.8" strokeDasharray="3.5 9" />
    <path d="M652 385C644 400 635 412 622 428" fill="none" stroke="#a8ccff" strokeWidth="2.5" filter="url(#soft)" />
    {SLATS.map(([x1, y1, x2, y2]) => (
      <g key={y1}>
        <line x1={x1} y1={y1} x2={x2} y2={y2} stroke="#3b5a8d" strokeWidth="3.8" />
        <line x1={x1 + 0.3} y1={y1 + 0.1} x2={x2 - 0.3} y2={y2 - 0.1} stroke="#7db0fd" strokeWidth="2.5" />
      </g>
    ))}
    <path d="M210 399L223 432" stroke="#3c5172" strokeWidth="0.6" />
    <path d="M525 463C528 472 532 482 538 490.5" fill="none" stroke="#3c5172" strokeWidth="0.6" />
    <path d="M520 457L525 465" stroke="#3c5172" strokeWidth="0.6" />
    <path d="M63 534V520" stroke="#2430c8" strokeWidth="1" />
    <path d="M63 534L71 516" stroke="#36c648" strokeWidth="1" />
    <path d="M63 534L86 539" stroke="#e04848" strokeWidth="1" />
    <text x="64" y="523" fontSize="10" fontWeight="700" fill="#2532d0" fontFamily="Liberation Sans, sans-serif">z</text>
    <text x="70" y="518" fontSize="11" fontWeight="700" fill="#28c040" fontFamily="Liberation Sans, sans-serif">y</text>
    <text x="84" y="542" fontSize="10" fontWeight="700" fill="#e03030" fontFamily="Liberation Sans, sans-serif">x</text>
  </ModelSvg>
);

export default function App() {
  return (
    <>
      <GlobalStyle />
      <svg width="0" height="0" style={{ position: "absolute" }}>
        <defs>
          <radialGradient id="ballGray" cx="0.4" cy="0.35" r="0.75"><stop offset="0" stopColor="#f2f2f2" /><stop offset="0.55" stopColor="#8c8c8c" /><stop offset="1" stopColor="#1f1f1f" /></radialGradient>
          <radialGradient id="ballDark" cx="0.5" cy="0.3" r="0.7"><stop offset="0" stopColor="#ffffff" /><stop offset="0.5" stopColor="#9a9a9a" /><stop offset="1" stopColor="#2a2a2a" /></radialGradient>
          <radialGradient id="ballBlue" cx="0.4" cy="0.35" r="0.75"><stop offset="0" stopColor="#b9d0ff" /><stop offset="0.45" stopColor="#2f62d8" /><stop offset="1" stopColor="#0b1f66" /></radialGradient>
          <radialGradient id="ballPale" cx="0.4" cy="0.3" r="0.8"><stop offset="0" stopColor="#e5f1fb" /><stop offset="0.5" stopColor="#4f93cf" /><stop offset="1" stopColor="#123f73" /></radialGradient>
          <radialGradient id="ballGreen" cx="0.3" cy="0.35" r="0.8"><stop offset="0" stopColor="#57e05a" /><stop offset="0.6" stopColor="#0f8a2b" /><stop offset="1" stopColor="#006633" /></radialGradient>
          <linearGradient id="envGrad" x1="0" y1="0" x2="1" y2="1"><stop offset="0" stopColor="#3e9bd8" /><stop offset="1" stopColor="#27c99a" /></linearGradient>
        </defs>
      </svg>
      <Window>
        <TitleBar>
          <svg width="8" height="8" viewBox="0 0 8 8"><path d="M0 1h3l1-1 4 2v5H0z" fill="#4a4a4a" /><path d="M1 6l2-3 3 1" stroke="#ddd" fill="none" strokeWidth=".7" /></svg>
          <TitleText>C:\Users\Administrator\Desktop\1.3dm (882 KB) - Rhinoceros WIP - [Perspective]</TitleText>
          <WinButton $gap={17} viewBox="0 0 8 8"><path d="M1 4h6" stroke="#666" /></WinButton>
          <WinButton $gap={17} viewBox="0 0 8 8"><path d="M1.5 2.5h4.5v4.5h-4.5zM3 2.5V1h4v4H6" fill="none" stroke="#444" /></WinButton>
          <WinButton $gap={10} viewBox="0 0 8 8"><path d="M1 1l6 6M7 1L1 7" stroke="#555" /></WinButton>
        </TitleBar>
        <MenuBar>
          {MENUS.map((m) => <span key={m}>{m}</span>)}
        </MenuBar>
        <CommandBox>
          <CommandLine $h={15}>
            {"选择着色设置 ( 显示模式(D)=SubDdisplay   显示曲线(R)=否   显示框线(A)=否   显示格线(W)=否   显示轴线(X)=否 )"}
            <LineFill />
            <ScrollArrows>{"⌃"}<br />{"⌄"}</ScrollArrows>
          </CommandLine>
          <CommandLine $h={13} $bold $line>
            指令:<Caret />
            <LineFill />
            <ScrollArrows $boxed>{"▲"}<br />{"▼"}</ScrollArrows>
          </CommandLine>
        </CommandBox>
        <TabStrip>
          <Tab $active $pad={11}>标准</Tab>
          {TABS.map((t) => <Tab key={t}>{t}</Tab>)}
        </TabStrip>
        <TabMore>»</TabMore>
        <TabGear />
        <Toolbar>
          {TOP_ICONS.map(([n, tri, on], i) => <Icon key={`${n}${i}`} n={n} tri={tri} on={on} size={14} />)}
        </Toolbar>
        <SubToolbar>
          <Icon n="disc" size={13} /><Icon n="disc" size={13} /><Icon n="disc" size={13} />
        </SubToolbar>
        <Main>
          <LeftTools>
            {LEFT_ICONS.map(([n, tri]) => <Icon key={n} n={n} tri={tri} w={15} />)}
          </LeftTools>
          <Viewport>
            <Model />
            <ViewLabel>Perspective<LabelArrow /></ViewLabel>
            <FloatPanel>
              <FloatHead>
                <MoBadge>Mo</MoBadge>
                <FloatTitle>卓尔调中键drow</FloatTitle>
                <FloatTools>
                  <svg width="7" height="7" viewBox="0 0 8 8"><circle cx="4" cy="4" r="2.6" fill="none" stroke="#e8e8e8" strokeWidth="1.6" /></svg>
                  <span>×</span>
                </FloatTools>
              </FloatHead>
              <FloatGrid>
                {FLOAT_ICONS.map((n, i) => <Icon key={i} n={n} tri={TRIANGLED.has(n)} w={15.7} />)}
              </FloatGrid>
            </FloatPanel>
          </Viewport>
          <RightPanel>
            <PanelBody>
              <PanelList>
                {ROWS_A.map(([name, on]) => <PropRow key={name} name={name} on={on} />)}
                <PropRow name="透明度"><span>0</span><Spinner>▲<br />▼</Spinner></PropRow>
                <Section>格线 &amp; 格线轴设定</Section>
                {ROWS_B.map(([name, on]) => <PropRow key={name} name={name} on={on} />)}
                <Section>物件设定</Section>
                <PropRow name="背面着色" on={1} />
                <PropRow name="背面..." indent={21} deep><Swatch /></PropRow>
                <PropRow name="边框方..." on={0} />
                <Section>截平面设置</Section>
                <PropRow name="封闭缺口" on={1} />
                <PropRow name="显示边缘" on={1} />
              </PanelList>
              <PanelScroll>
                <ScrollEnd $h={106}>⌃</ScrollEnd>
                <ScrollThumb />
                <ScrollEnd $h={11}>⌄</ScrollEnd>
              </PanelScroll>
            </PanelBody>
            <PanelButton>编辑"着色模式"设定...</PanelButton>
          </RightPanel>
          <DockTabs>
            {DOCK.map(([icon, label, h]) => (
              <DockTab key={label} $h={h}>
                <svg width="9" height="9" viewBox="0 0 16 16">{G[icon]}</svg>
                <DockLabel>{label}</DockLabel>
              </DockTab>
            ))}
            <DockGear />
          </DockTabs>
        </Main>
        <OsnapBar>
          {OSNAPS.map(([name, state, w]) => (
            <Osnap key={name} $w={w} $off={state === 2}>
              <Check $size={5} $off={state === 2}>{state === 1 ? <Tick /> : null}</Check>
              {name}
            </Osnap>
          ))}
        </OsnapBar>
        <StatusBar>
          <StatusCell $w={37}>工作平面</StatusCell>
          <StatusCell $w={44}>x 141.301</StatusCell>
          <StatusCell $w={55}>y 439.849</StatusCell>
          <StatusCell $w={44}>z 0.000</StatusCell>
          <StatusCell $w={54}>毫米</StatusCell>
          <StatusCell $w={138} $left><ColorSquare />默认</StatusCell>
          <StatusToggle>锁定格点</StatusToggle>
          <StatusToggle>正交</StatusToggle>
          <StatusToggle $on>平面模式</StatusToggle>
          <StatusToggle $on>物件锁点</StatusToggle>
          <StatusToggle>智慧轨迹</StatusToggle>
          <StatusToggle $on>操作轴</StatusToggle>
          <StatusToggle>记录建构历史</StatusToggle>
          <StatusToggle>过滤器</StatusToggle>
          <StatusCell $w={60} $plain>绝对公差: 0.01</StatusCell>
        </StatusBar>
      </Window>
    </>
  );
}
